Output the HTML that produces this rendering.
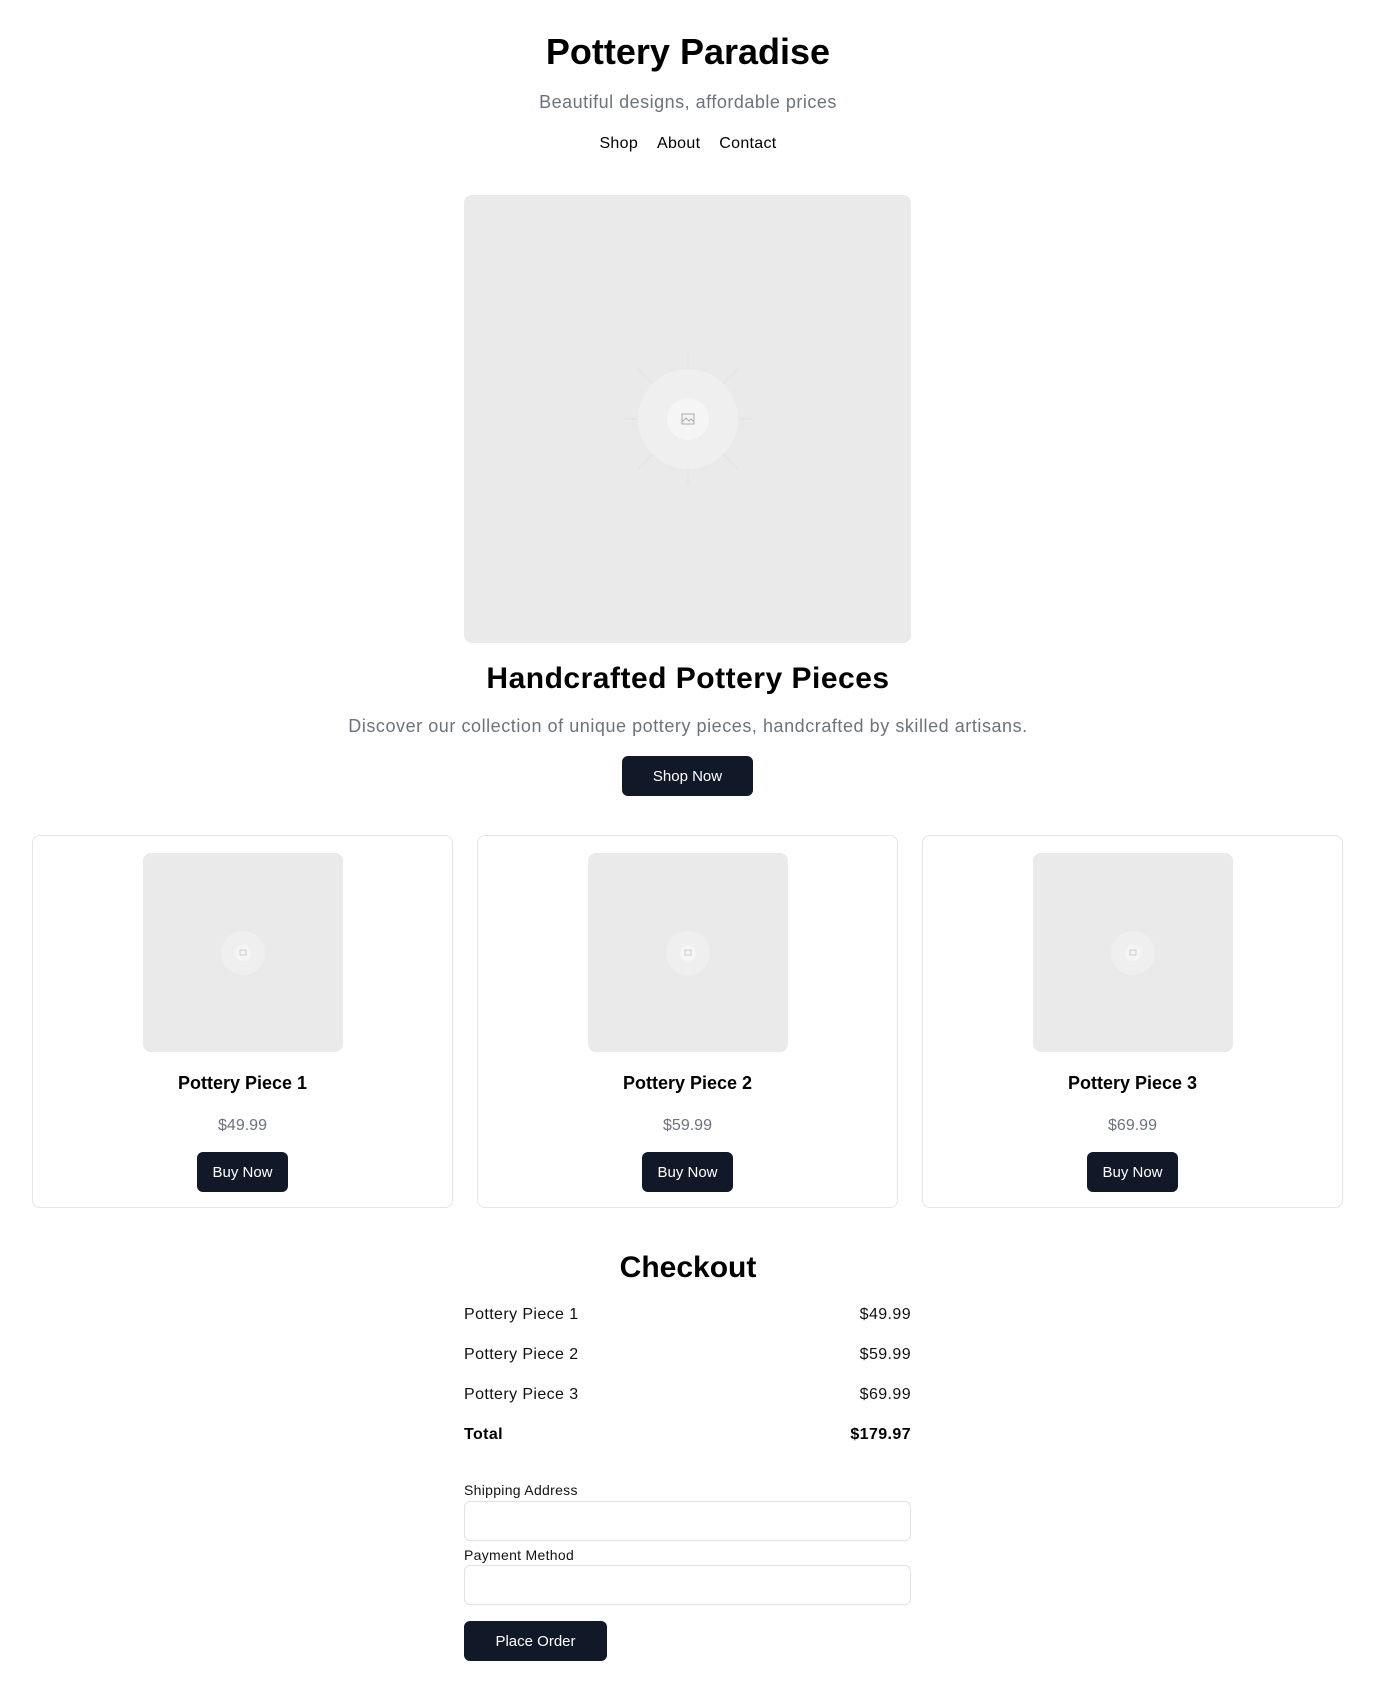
<!DOCTYPE html>
<html><head><meta charset="utf-8"><style>
*{box-sizing:border-box;margin:0;padding:0}
body{width:1376px;height:1694px;background:#fff;font-family:"Liberation Sans",sans-serif;color:#000;position:relative;overflow:hidden}
.a{position:absolute}
.c{left:0;width:1376px;text-align:center}
.btn{background:#111827;color:#fff;border-radius:6px;font-size:15px;display:flex;align-items:center;justify-content:center}
.ph{background:#eaeaea;border-radius:8px;display:flex;align-items:center;justify-content:center}
.card{border:1px solid #e5e5e5;border-radius:8px;top:835px;width:421px;height:373px}
.row{left:464px;width:447px;display:flex;justify-content:space-between;font-size:16px;color:#111;letter-spacing:.4px}
.inp{left:464px;width:447px;height:40px;border:1px solid #e2e2e2;border-radius:6px}
.lbl{left:464px;font-size:14px;color:#111;letter-spacing:.3px}
.ct{width:421px;text-align:center}
</style></head><body>
<div class="a c" style="top:30px;font-size:36px;font-weight:bold;line-height:44px">Pottery Paradise</div>
<div class="a c" style="top:91px;font-size:18px;color:#6b7280;line-height:22px;letter-spacing:.5px">Beautiful designs, affordable prices</div>
<div class="a c" style="top:134px;font-size:16px;line-height:20px;letter-spacing:.3px">Shop&nbsp;&nbsp;&nbsp;&nbsp;About&nbsp;&nbsp;&nbsp;&nbsp;Contact</div>
<div class="a ph" style="left:464px;top:195px;width:447px;height:448px">
<svg width="130" height="130" viewBox="0 0 130 130"><g stroke="#e2e2e2" stroke-width="1" fill="none"><line x1="65" y1="0" x2="65" y2="130"/><line x1="0" y1="65" x2="130" y2="65"/><line x1="15" y1="15" x2="115" y2="115"/><line x1="115" y1="15" x2="15" y2="115"/></g><circle cx="65" cy="65" r="50" fill="#efefef"/><circle cx="65" cy="65" r="21" fill="#f5f5f5"/><rect x="59" y="60" width="12" height="10" fill="none" stroke="#aaa"/><path d="M59 68l4-4 3 3 2-2 3 3" stroke="#aaa" fill="none"/></svg></div>
<div class="a c" style="top:660px;font-size:30px;font-weight:bold;line-height:38px;letter-spacing:.5px">Handcrafted Pottery Pieces</div>
<div class="a c" style="top:715px;font-size:18px;color:#6b7280;line-height:22px;letter-spacing:.55px">Discover our collection of unique pottery pieces, handcrafted by skilled artisans.</div>
<div class="a btn" style="left:622px;top:756px;width:131px;height:40px">Shop Now</div>

<div class="a card" style="left:32px"></div>
<div class="a card" style="left:477px"></div>
<div class="a card" style="left:922px"></div>

<div class="a ph" style="left:143px;top:853px;width:200px;height:199px"><svg width="50" height="50"><circle cx="25" cy="25" r="22" fill="#efefef"/><circle cx="25" cy="25" r="8" fill="#f5f5f5"/><rect x="22" y="22" width="6" height="5" fill="none" stroke="#bbb" stroke-width=".7"/></svg></div>
<div class="a ph" style="left:588px;top:853px;width:200px;height:199px"><svg width="50" height="50"><circle cx="25" cy="25" r="22" fill="#efefef"/><circle cx="25" cy="25" r="8" fill="#f5f5f5"/><rect x="22" y="22" width="6" height="5" fill="none" stroke="#bbb" stroke-width=".7"/></svg></div>
<div class="a ph" style="left:1033px;top:853px;width:200px;height:199px"><svg width="50" height="50"><circle cx="25" cy="25" r="22" fill="#efefef"/><circle cx="25" cy="25" r="8" fill="#f5f5f5"/><rect x="22" y="22" width="6" height="5" fill="none" stroke="#bbb" stroke-width=".7"/></svg></div>

<div class="a ct" style="left:32px;top:1073px;font-size:18px;font-weight:bold">Pottery Piece 1</div>
<div class="a ct" style="left:477px;top:1073px;font-size:18px;font-weight:bold">Pottery Piece 2</div>
<div class="a ct" style="left:922px;top:1073px;font-size:18px;font-weight:bold">Pottery Piece 3</div>
<div class="a ct" style="left:32px;top:1117px;font-size:16px;color:#6b7280">$49.99</div>
<div class="a ct" style="left:477px;top:1117px;font-size:16px;color:#6b7280">$59.99</div>
<div class="a ct" style="left:922px;top:1117px;font-size:16px;color:#6b7280">$69.99</div>
<div class="a btn" style="left:197px;top:1152px;width:91px;height:40px">Buy Now</div>
<div class="a btn" style="left:642px;top:1152px;width:91px;height:40px">Buy Now</div>
<div class="a btn" style="left:1087px;top:1152px;width:91px;height:40px">Buy Now</div>

<div class="a c" style="top:1249px;font-size:30px;font-weight:bold;line-height:38px">Checkout</div>
<div class="a row" style="top:1306px"><span>Pottery Piece 1</span><span>$49.99</span></div>
<div class="a row" style="top:1346px"><span>Pottery Piece 2</span><span>$59.99</span></div>
<div class="a row" style="top:1386px"><span>Pottery Piece 3</span><span>$69.99</span></div>
<div class="a row" style="top:1426px;font-weight:bold;color:#000"><span>Total</span><span>$179.97</span></div>
<div class="a lbl" style="top:1482px">Shipping Address</div>
<div class="a inp" style="top:1501px"></div>
<div class="a lbl" style="top:1547px">Payment Method</div>
<div class="a inp" style="top:1565px"></div>
<div class="a btn" style="left:464px;top:1621px;width:143px;height:40px">Place Order</div>
</body></html>
